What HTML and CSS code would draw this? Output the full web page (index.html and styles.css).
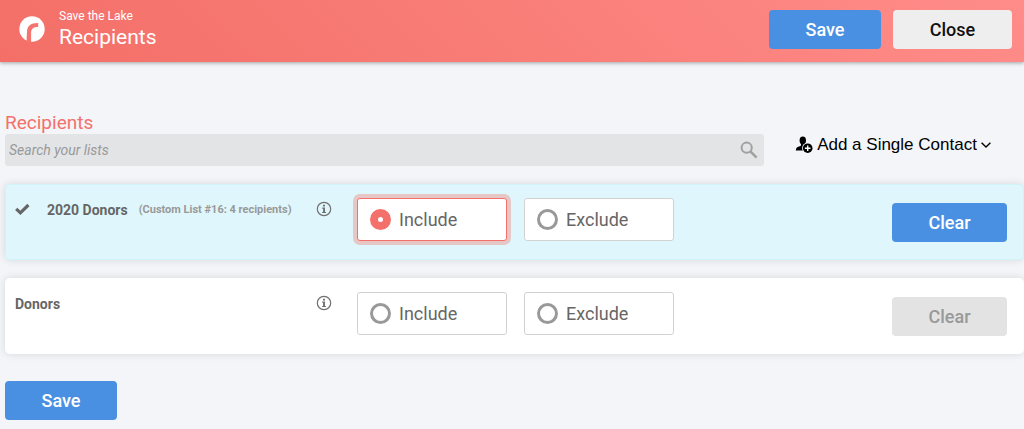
FILE: index.html
```
<!DOCTYPE html>
<html lang="en">
<head>
    <meta charset="UTF-8">
    <meta name="viewport" content="width=device-width, initial-scale=1.0">
    <title>Recipients</title>
    <link rel="stylesheet" href="styles.css">
</head>
<body>
    <header class="header">
        <svg class="logo" viewBox="0 0 26 26" aria-hidden="true">
            <circle cx="13" cy="13" r="12.7" fill="#fff"/>
            <path d="M7.4 27L8 16C8.2 9.6 11.6 6.9 19.2 7V11C14 11 12.2 12.8 12.1 17V27Z" fill="#f3756d"/>
        </svg>
        <div class="heading">
            <p class="campaign">Save the Lake</p>
            <h1>Recipients</h1>
        </div>
        <div class="header-actions">
            <button type="submit" class="btn primary" form="recipients">Save</button>
            <button type="button" class="btn light">Close</button>
        </div>
    </header>

    <main>
        <form id="recipients">
            <div class="toolbar">
                <div class="search-group">
                    <h2><label for="search">Recipients</label></h2>
                    <div class="search">
                        <input type="text" id="search" placeholder="Search your lists">
                        <svg viewBox="0 0 18 18" width="18" height="18" aria-hidden="true">
                            <circle cx="6.7" cy="6.7" r="5.1" fill="none" stroke="#a0a0a0" stroke-width="2"/>
                            <path d="M10.6 10.6L16.6 16.6" stroke="#a0a0a0" stroke-width="2.6"/>
                        </svg>
                    </div>
                </div>
                <button type="button" class="add-contact">
                    <svg viewBox="0 0 18 18" width="18" height="18" aria-hidden="true">
                        <ellipse cx="7.8" cy="4.4" rx="3.2" ry="4"/>
                        <path d="M6 7H9.5V10L9 14.4H0.8C0.8 11.6 2.4 11 4.8 10.3C5.8 10 6 9.6 6 8.8Z"/>
                        <circle cx="12.7" cy="12.2" r="5.6" fill="#f4f5f8"/>
                        <circle cx="12.7" cy="12.2" r="4.8"/>
                        <path d="M12.7 9.4V15M9.9 12.2H15.5" stroke="#fff" stroke-width="1.4"/>
                    </svg>
                    <span>Add a Single Contact</span>
                    <svg viewBox="0 0 10 6" width="10" height="6" aria-hidden="true">
                        <path d="M0.6 0.7L5 5L9.4 0.7" fill="none" stroke="#000" stroke-width="1.4"/>
                    </svg>
                </button>
            </div>

            <section class="row selected">
                <div class="name">
                    <svg class="check" viewBox="0 0 16 14" width="16" height="14" aria-hidden="true">
                        <path d="M1.2 5.8L5.4 9.8L13.4 2" fill="none" stroke="#666" stroke-width="3.2"/>
                    </svg>
                    <h3>2020 Donors</h3>
                    <small>(Custom List #16: 4 recipients)</small>
                </div>
                <button type="button" class="info" aria-label="List details">
                    <svg viewBox="0 0 16 16" width="16" height="16" aria-hidden="true">
                        <circle cx="8" cy="8" r="6.7" fill="none" stroke="#707070" stroke-width="1.2"/>
                        <path d="M7 3.8H9V5.4H7ZM6.2 6.6H9V10.9H10V12H6.1V10.9H7.1V7.7H6.2Z" fill="#707070"/>
                    </svg>
                </button>
                <div class="options">
                    <label class="option"><input type="radio" name="list-16" checked>Include</label>
                    <label class="option"><input type="radio" name="list-16">Exclude</label>
                </div>
                <button type="button" class="btn primary clear">Clear</button>
            </section>

            <section class="row">
                <div class="name">
                    <h3>Donors</h3>
                </div>
                <button type="button" class="info" aria-label="List details">
                    <svg viewBox="0 0 16 16" width="16" height="16" aria-hidden="true">
                        <circle cx="8" cy="8" r="6.7" fill="none" stroke="#707070" stroke-width="1.2"/>
                        <path d="M7 3.8H9V5.4H7ZM6.2 6.6H9V10.9H10V12H6.1V10.9H7.1V7.7H6.2Z" fill="#707070"/>
                    </svg>
                </button>
                <div class="options">
                    <label class="option"><input type="radio" name="donors">Include</label>
                    <label class="option"><input type="radio" name="donors">Exclude</label>
                </div>
                <button type="button" class="btn clear" disabled>Clear</button>
            </section>

            <button type="submit" class="btn primary">Save</button>
        </form>
    </main>
</body>
</html>
```
FILE: styles.css
```
:root {
    --coral: #f3716a;
    --blue: #4a90e2;
    --page-bg: #f4f5f8;
    --selected-bg: #dff7fc;
    --text: #666;
    --muted: #999;
}

* {
    margin: 0;
    padding: 0;
    box-sizing: border-box;
}

body {
    background-color: var(--page-bg);
    color: var(--text);
    font-family: Roboto, sans-serif;
    overflow-x: hidden;
}

button,
input {
    font-family: inherit;
}

.header {
    display: flex;
    align-items: center;
    gap: 14px;
    padding: 8px 12px 12px 19px;
    color: #fff;
    background: linear-gradient(45deg, #f36f67, #ff8c89);
    box-shadow: 0 1px 4px rgba(0, 0, 0, 0.35);
}

.logo {
    width: 26px;
    height: 26px;
}

.campaign {
    font-size: 12px;
    line-height: 16px;
}

h1 {
    font-size: 21px;
    font-weight: 400;
    line-height: 26px;
}

.header-actions {
    display: flex;
    gap: 12px;
    margin-left: auto;
}

.btn {
    min-width: 112px;
    height: 39px;
    border: none;
    border-radius: 4px;
    font-size: 18px;
    font-weight: 500;
    cursor: pointer;
}

.primary {
    color: #fff;
    background-color: var(--blue);
}

.light {
    min-width: 119px;
    color: #111;
    background-color: #eee;
}

.btn:disabled {
    color: var(--muted);
    background-color: #e3e3e3;
    cursor: default;
}

main {
    padding: 50px 0 8px 5px;
}

.toolbar {
    display: flex;
    align-items: flex-start;
    gap: 31px;
    margin-bottom: 18px;
}

.search-group {
    width: 74.5%;
}

h2 {
    color: var(--coral);
    font-size: 19px;
    font-weight: 400;
    line-height: 22px;
}

.search {
    display: flex;
    align-items: center;
    height: 32px;
    padding: 0 6px 0 4px;
    border-radius: 3px;
    background-color: #e3e4e6;
}

.search input {
    flex: 1;
    border: none;
    outline: none;
    background: none;
    font-size: 14px;
}

.search input::placeholder {
    color: var(--muted);
    font-style: italic;
}

.add-contact {
    display: flex;
    align-items: center;
    gap: 4px;
    margin-top: 23px;
    border: none;
    background: none;
    color: #000;
    font-family: "Liberation Sans", Arial, sans-serif;
    font-size: 17px;
    line-height: 20px;
    white-space: nowrap;
    cursor: pointer;
}

.row {
    display: grid;
    grid-template-columns: minmax(0, 301fr) 16px minmax(0, 560fr) 115px;
    align-items: start;
    min-height: 76px;
    margin-bottom: 18px;
    padding: 14px 17px 14px 10px;
    border-radius: 5px;
    background-color: #fff;
    box-shadow: 0 0 8px rgba(0, 0, 0, 0.12);
}

.row.selected {
    background-color: var(--selected-bg);
    box-shadow: inset 0 0 0 1px #d0f2f9, 0 0 8px rgba(0, 0, 0, 0.12);
}

.row:last-of-type {
    margin-bottom: 27px;
}

.name {
    display: flex;
    align-items: center;
    padding-top: 2px;
    line-height: 20px;
    white-space: nowrap;
}

.check {
    margin-right: 16px;
}

h3 {
    font-size: 14px;
    font-weight: 700;
}

small {
    margin-left: 11px;
    color: var(--muted);
    font-size: 11px;
    font-weight: 700;
}

.info {
    height: 16px;
    margin-top: 3px;
    border: none;
    background: none;
    cursor: pointer;
}

.info svg {
    display: block;
}

.options {
    display: flex;
    gap: 17px;
    padding-left: 25px;
}

.option {
    display: flex;
    align-items: center;
    gap: 8px;
    width: 150px;
    height: 43px;
    padding-left: 12px;
    border: 1px solid #d2d2d2;
    border-radius: 3px;
    background-color: #fff;
    font-size: 18px;
    line-height: 20px;
    cursor: pointer;
}

.option:has(input:checked) {
    border-color: var(--coral);
    box-shadow: 0 0 0 4px #e7c6c6;
}

.option input {
    appearance: none;
    width: 21px;
    height: 21px;
    border: 3px solid var(--muted);
    border-radius: 50%;
    cursor: pointer;
}

.option input:checked {
    border: 8px solid var(--coral);
}

.clear {
    margin-top: 5px;
}
```
